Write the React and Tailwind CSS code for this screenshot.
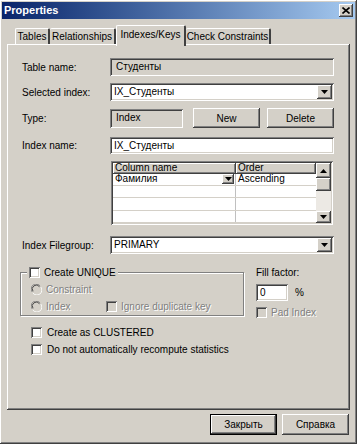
import React from 'react'

const sunken = 'shadow-[inset_1px_1px_#808080,inset_-1px_-1px_#ffffff,inset_2px_2px_#404040,inset_-2px_-2px_#d4d0c8]'
const raised = 'shadow-[inset_-1px_-1px_#404040,inset_1px_1px_#ffffff,inset_-2px_-2px_#808080,inset_2px_2px_#d4d0c8]'
const etched = 'text-[#808080] [text-shadow:1px_1px_0_#ffffff]'

function Arrow({ up }) {
  return (
    <svg width="7" height="4" viewBox="0 0 7 4" className={up ? 'rotate-180' : ''}>
      <path d="M0 0h7L3.5 4z" fill="#000" />
    </svg>
  )
}

function DropBtn({ className = '' }) {
  return (
    <div className={`flex items-center justify-center bg-[#d4d0c8] ${raised} ${className}`}>
      <Arrow />
    </div>
  )
}

function Combo({ value, className = '' }) {
  return (
    <div className={`flex h-[18px] items-stretch bg-white p-[2px] ${sunken} ${className}`}>
      <span className="flex flex-1 items-center pl-[2px] leading-none">{value}</span>
      <DropBtn className="w-[15px]" />
    </div>
  )
}

function Field({ value, grey, className = '' }) {
  return (
    <div className={`flex items-center pl-[4px] leading-none ${grey ? 'bg-[#d4d0c8]' : 'bg-white'} ${sunken} ${className}`}>
      {value}
    </div>
  )
}

function Button({ children, def, className = '' }) {
  return (
    <div className={`flex items-center justify-center bg-[#d4d0c8] ${def ? 'border border-black' : ''} ${raised} ${className}`}>
      {children}
    </div>
  )
}

function Check({ disabled }) {
  return <span className={`inline-block h-[11px] w-[11px] shrink-0 ${disabled ? 'bg-[#d4d0c8]' : 'bg-white'} ${sunken}`} />
}

function Radio() {
  return (
    <svg width="11" height="11" viewBox="0 0 12 12" className="shrink-0">
      <circle cx="6" cy="6" r="5.5" fill="#d4d0c8" />
      <path d="M10 2.2A5.3 5.3 0 0 0 1.2 8.6" stroke="#808080" strokeWidth="1" fill="none" />
      <path d="M9.3 3A4.3 4.3 0 0 0 2.2 8" stroke="#404040" strokeWidth="1" fill="none" />
      <path d="M2 9.8A5.3 5.3 0 0 0 10.8 3.4" stroke="#ffffff" strokeWidth="1" fill="none" />
    </svg>
  )
}

function Grid() {
  const rows = [['Фамилия', 'Ascending'], ['', ''], ['', ''], ['', '']]
  return (
    <div className={`ml-[1px] flex h-[64px] w-[222px] bg-white p-[2px] ${sunken}`}>
      <div className="flex flex-1 flex-col">
        <div className="flex h-[11px] leading-none">
          <div className={`flex w-[123px] items-center bg-[#d4d0c8] pl-[2px] ${raised.replace('inset_2px_2px_#d4d0c8', 'inset_2px_2px_#d4d0c8')}`}>Column name</div>
          <div className={`flex flex-1 items-center bg-[#d4d0c8] pl-[2px] ${raised}`}>Order</div>
        </div>
        {rows.map((r, i) => (
          <div key={i} className="flex h-[12.5px] border-b border-[#d4d0c8] leading-none">
            <div className="flex w-[123px] items-center border-r border-[#c0c0c0] pl-[2px]">
              <span className="flex-1">{r[0]}</span>
              {i === 0 && <DropBtn className="mr-[1px] h-[10px] w-[12px]" />}
            </div>
            <div className="flex flex-1 items-center pl-[2px]">{r[1]}</div>
          </div>
        ))}
      </div>
      <div className="flex w-[15px] flex-col bg-[#ece9e4]">
        <DropBtn className="h-[15px] w-[15px] [&_svg]:rotate-180" />
        <div className={`h-[13px] bg-[#d4d0c8] ${raised}`} />
        <div className="flex-1" />
        <DropBtn className="h-[12px] w-[15px]" />
      </div>
    </div>
  )
}

export default function App() {
  return (
    <div className={`flex h-[444px] w-[357px] flex-col bg-[#d4d0c8] p-[2px] font-['Liberation_Sans',Arial,sans-serif] text-[10px] text-black ${raised}`}>
      {/* title bar */}
      <div className="flex h-[17px] items-center bg-gradient-to-r from-[#0a246a] to-[#a6caf0] pl-[2px] pr-[2px]">
        <span className="flex-1 text-[11px] font-bold text-white">Properties</span>
        <div className={`flex h-[13px] w-[14px] items-center justify-center bg-[#d4d0c8] ${raised}`}>
          <svg width="8" height="7" viewBox="0 0 8 7">
            <path d="M0.5 0.5l7 6M7.5 0.5l-7 6" stroke="#000" strokeWidth="1.6" />
          </svg>
        </div>
      </div>

      {/* tabs */}
      <div className="ml-[13px] mt-[5px] flex h-[20px] items-end leading-none">
        <div className="flex h-[16px] w-[35px] items-center justify-center rounded-t-[2px] border-l border-t border-white border-r-2 border-r-[#404040]">Tables</div>
        <div className="flex h-[16px] w-[66px] items-center justify-center rounded-t-[2px] border-t border-white border-r-2 border-r-[#404040]">Relationships</div>
        <div className="relative z-10 -mb-[2px] flex h-[21px] w-[70px] items-start justify-center rounded-t-[2px] border-l border-t border-white border-r-2 border-r-[#404040] bg-[#d4d0c8] pt-[4px]">Indexes/Keys</div>
        <div className="flex h-[16px] w-[85px] items-center justify-center rounded-t-[2px] border-t border-white border-r-2 border-r-[#404040]">Check Constraints</div>
      </div>

      {/* panel */}
      <div className={`ml-[5px] flex h-[366px] w-[343px] flex-col pl-[15px] pr-[16px] ${raised}`}>
        <div className="mt-[14px] flex h-[18px] items-center">
          <span className="w-[88px]">Table name:</span>
          <Field grey value="Студенты" className="h-[18px] flex-1 pl-[6px]" />
        </div>
        <div className="mt-[7px] flex items-center">
          <span className="w-[88px]">Selected index:</span>
          <Combo value="IX_Студенты" className="flex-1" />
        </div>
        <div className="mt-[7px] flex h-[20px] items-center">
          <span className="w-[88px]">Type:</span>
          <Field grey value="Index" className="h-[19px] w-[73px] pl-[6px]" />
          <Button className="ml-[10px] h-[20px] w-[67px]">New</Button>
          <Button className="ml-[7px] h-[20px] w-[67px]">Delete</Button>
        </div>
        <div className="mt-[9px] flex h-[17px] items-center">
          <span className="w-[88px]">Index name:</span>
          <Field value="IX_Студенты" className="h-[17px] flex-1" />
        </div>
        <div className="mt-[7px] flex pl-[88px]">
          <Grid />
        </div>
        <div className="mt-[11px] flex items-center">
          <span className="w-[88px]">Index Filegroup:</span>
          <Combo value="PRIMARY" className="flex-1" />
        </div>

        <div className="mt-[13px] flex">
          <fieldset className="-ml-[2px] h-[49px] w-[224px] border border-[#808080] shadow-[inset_1px_1px_#ffffff,1px_1px_#ffffff]">
            <legend className="ml-[6px] flex items-center gap-[4px] bg-[#d4d0c8] px-[2px] leading-none">
              <Check />
              <span>Create UNIQUE</span>
            </legend>
            <div className="ml-[10px] mt-[6px] flex items-center gap-[4px] leading-none">
              <Radio />
              <span className={etched}>Constraint</span>
            </div>
            <div className="ml-[10px] mt-[6px] flex items-center leading-none">
              <Radio />
              <span className={`ml-[4px] w-[60px] ${etched}`}>Index</span>
              <Check disabled />
              <span className={`ml-[4px] ${etched}`}>Ignore duplicate key</span>
            </div>
          </fieldset>
          <div className="ml-[12px] flex flex-col leading-none">
            <span className="mt-[1px]">Fill factor:</span>
            <div className="mt-[6px] flex items-center">
              <Field value="0" className="h-[17px] w-[32px] pl-[3px]" />
              <span className="ml-[7px]">%</span>
            </div>
            <div className="mt-[6px] flex items-center gap-[4px]">
              <Check disabled />
              <span className={etched}>Pad Index</span>
            </div>
          </div>
        </div>

        <div className="ml-[9px] mt-[9px] flex items-center gap-[5px] leading-none">
          <Check />
          <span>Create as CLUSTERED</span>
        </div>
        <div className="ml-[9px] mt-[6px] flex items-center gap-[5px] leading-none">
          <Check />
          <span>Do not automatically recompute statistics</span>
        </div>
      </div>

      {/* bottom buttons */}
      <div className="mt-[4px] flex justify-end gap-[5px] pr-[6px]">
        <Button def className="h-[21px] w-[67px]">Закрыть</Button>
        <Button className="h-[21px] w-[67px]">Справка</Button>
      </div>
    </div>
  )
}
